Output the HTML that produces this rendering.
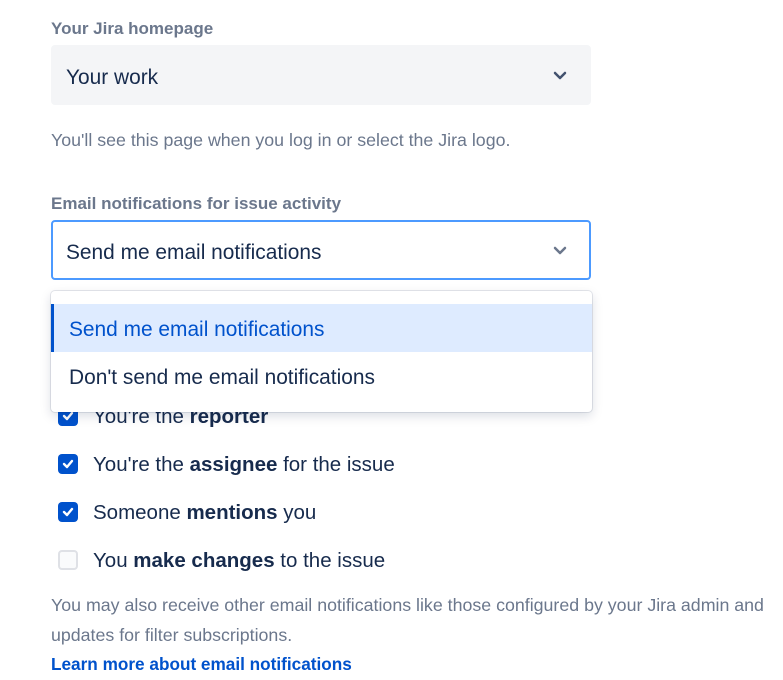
<!DOCTYPE html>
<html><head><style>
body{margin:0;background:#fff;font-family:"Liberation Sans",sans-serif;color:#172B4D;width:783px;height:680px;overflow:hidden;position:relative}
.a{position:absolute;white-space:nowrap}
.lbl{font-size:17px;font-weight:bold;color:#6B778C}
.sel{position:absolute;left:51px;width:540px;height:60px;box-sizing:border-box;border-radius:4px;font-size:20.9px;line-height:60px;padding-left:15px}
.chev{position:absolute;right:22px;top:22px}
.help{font-size:17.8px;color:#6B778C}
.cb{position:absolute;left:58px;width:20px;height:20px;border-radius:4px;background:#0052CC;box-sizing:border-box}
.cbt{position:absolute;left:93px;font-size:20.5px;white-space:nowrap;line-height:26px}
</style></head><body>
<div class="a lbl" style="left:51px;top:19px">Your Jira homepage</div>
<div class="sel" style="top:45px;background:#F4F5F7;border:2px solid #F4F5F7;padding-left:13px;line-height:61px">Your work
<svg class="chev" width="14" height="10" viewBox="0 0 14 10" style="top:24px;right:22px"><path d="M2 2l5 5 5-5" fill="none" stroke="#42526E" stroke-width="2.5" stroke-linecap="round" stroke-linejoin="round"/></svg></div>
<div class="a help" style="left:51px;top:130px">You'll see this page when you log in or select the Jira logo.</div>
<div class="a lbl" style="left:51px;top:194px">Email notifications for issue activity</div>
<div class="sel" style="top:220px;background:#fff;border:2px solid #4C9AFF;padding-left:13px;line-height:61px">Send me email notifications
<svg class="chev" width="14" height="10" viewBox="0 0 14 10" style="top:24px;right:22px"><path d="M2 2l5 5 5-5" fill="none" stroke="#6B778C" stroke-width="2.5" stroke-linecap="round" stroke-linejoin="round"/></svg></div>

<div class="cb" style="top:406px"><svg width="20" height="20" viewBox="0 0 20 20"><path d="M6 10l3 3 5-6" fill="none" stroke="#fff" stroke-width="2.4" stroke-linecap="round" stroke-linejoin="round"/></svg></div>
<div class="cbt" style="top:404px">You're the <b>reporter</b></div>

<div style="position:absolute;left:51px;top:291px;width:541px;height:121px;background:#fff;border-radius:4px;box-shadow:0 0 0 1px rgba(9,30,66,.1),0 4px 11px rgba(9,30,66,.15)">
<div style="position:absolute;left:0;top:13px;width:541px;height:48px;background:#DEEBFF;border-left:3px solid #0052CC;box-sizing:border-box;color:#0052CC;font-size:20.9px;line-height:52px;padding-left:15px">Send me email notifications</div>
<div style="position:absolute;left:0;top:61px;width:541px;height:48px;font-size:20.9px;line-height:52px;padding-left:18px;box-sizing:border-box">Don't send me email notifications</div>
</div>

<div class="cb" style="top:454px"><svg width="20" height="20" viewBox="0 0 20 20"><path d="M6 10l3 3 5-6" fill="none" stroke="#fff" stroke-width="2.4" stroke-linecap="round" stroke-linejoin="round"/></svg></div>
<div class="cbt" style="top:452px">You're the <b>assignee</b> for the issue</div>
<div class="cb" style="top:502px"><svg width="20" height="20" viewBox="0 0 20 20"><path d="M6 10l3 3 5-6" fill="none" stroke="#fff" stroke-width="2.4" stroke-linecap="round" stroke-linejoin="round"/></svg></div>
<div class="cbt" style="top:500px">Someone <b>mentions</b> you</div>
<div class="cb" style="top:550px;background:#FAFBFC;border:2px solid #DFE1E6"></div>
<div class="cbt" style="top:548px">You <b>make changes</b> to the issue</div>

<div class="a help" style="left:51px;top:590px;line-height:30px">You may also receive other email notifications like those configured by your Jira admin and<br>updates for filter subscriptions.</div>
<div class="a" style="left:51px;top:654px;font-size:17.2px;font-weight:bold;color:#0052CC">Learn more about email notifications</div>
</body></html>
